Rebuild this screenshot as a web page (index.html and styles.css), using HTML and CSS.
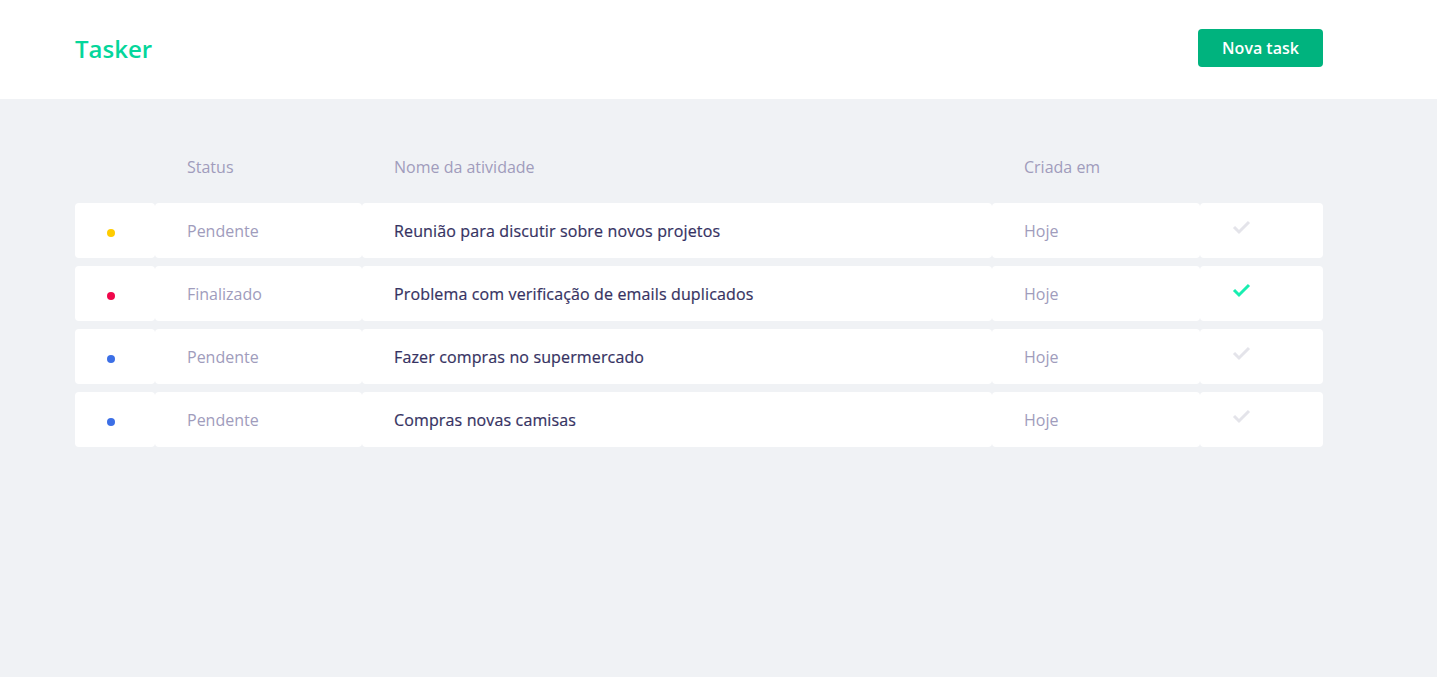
FILE: index.html
```html
<!DOCTYPE html>
<html lang="pt-BR">
<head>
<meta charset="utf-8">
<title>Tasker</title>
<link rel="stylesheet" href="styles.css">
</head>
<body>
<header class="topbar">
  <div class="topbar-inner">
    <h1 class="logo">Tasker</h1>
    <button class="btn-new" type="button">Nova task</button>
  </div>
</header>
<main class="content">
  <table class="tasks">
    <colgroup>
      <col class="c-dot"><col class="c-status"><col class="c-name"><col class="c-date"><col class="c-check">
    </colgroup>
    <thead>
      <tr><th></th><th>Status</th><th>Nome da atividade</th><th>Criada em</th><th></th></tr>
    </thead>
    <tbody>
      <tr>
        <td><span class="dot dot-yellow"></span></td>
        <td class="muted">Pendente</td>
        <td class="name">Reunião para discutir sobre novos projetos</td>
        <td class="muted">Hoje</td>
        <td><svg class="check" width="19" height="16" viewBox="0 0 19 16"><polyline points="2,8 7,13 17,3" fill="none" stroke="currentColor" stroke-width="3"/></svg></td>
      </tr>
      <tr>
        <td><span class="dot dot-red"></span></td>
        <td class="muted">Finalizado</td>
        <td class="name">Problema com verificação de emails duplicados</td>
        <td class="muted">Hoje</td>
        <td><svg class="check done" width="19" height="16" viewBox="0 0 19 16"><polyline points="2,8 7,13 17,3" fill="none" stroke="currentColor" stroke-width="3"/></svg></td>
      </tr>
      <tr>
        <td><span class="dot dot-blue"></span></td>
        <td class="muted">Pendente</td>
        <td class="name">Fazer compras no supermercado</td>
        <td class="muted">Hoje</td>
        <td><svg class="check" width="19" height="16" viewBox="0 0 19 16"><polyline points="2,8 7,13 17,3" fill="none" stroke="currentColor" stroke-width="3"/></svg></td>
      </tr>
      <tr>
        <td><span class="dot dot-blue"></span></td>
        <td class="muted">Pendente</td>
        <td class="name">Compras novas camisas</td>
        <td class="muted">Hoje</td>
        <td><svg class="check" width="19" height="16" viewBox="0 0 19 16"><polyline points="2,8 7,13 17,3" fill="none" stroke="currentColor" stroke-width="3"/></svg></td>
      </tr>
    </tbody>
  </table>
</main>
</body>
</html>
```

FILE: styles.css
```css
* { box-sizing: border-box; }
html, body { margin: 0; padding: 0; }
body {
  background: #f0f2f5;
  font-family: "Open Sans", "Noto Sans", sans-serif;
  font-size: 16px;
  min-height: 677px;
}
.topbar {
  background: #ffffff;
  height: 99px;
}
.topbar-inner {
  width: 1248px;
  margin-left: 75px;
  height: 99px;
  display: flex;
  align-items: center;
  justify-content: space-between;
}
.logo {
  margin: 0;
  font-size: 24px;
  font-weight: 600;
  color: #04d69b;
  position: relative;
  top: -1px;
}
.btn-new {
  width: 125px;
  height: 38px;
  border: 0;
  border-radius: 4px;
  background: #00b37e;
  color: #ffffff;
  font-family: inherit;
  font-size: 16px;
  font-weight: 600;
  cursor: pointer;
  margin-top: -4px;
}
.content {
  padding: 33px 0 0 75px;
}
.tasks {
  width: 1248px;
  border-collapse: separate;
  border-spacing: 0 8px;
  table-layout: fixed;
}
.c-dot { width: 80px; }
.c-status { width: 207px; }
.c-name { width: 630px; }
.c-date { width: 208px; }
.c-check { width: 123px; }
.tasks th {
  text-align: left;
  font-weight: 400;
  color: #a09cbc;
  padding: 16px 32px;
  line-height: 23px;
}
.tasks td {
  background: #ffffff;
  padding: 17px 32px 15px;
  line-height: 23px;
  border-radius: 4px;
  vertical-align: middle;
}
.muted { color: #a09cbc; }
.name {
  color: #363262;
  letter-spacing: 0.14px;
  -webkit-text-stroke: 0.2px #363262;
}
.dot {
  display: inline-block;
  width: 8px;
  height: 8px;
  border-radius: 50%;
  vertical-align: middle;
  position: relative;
  top: 0px;
}
.dot-yellow { background: #ffcc00; }
.dot-red { background: #f0074b; }
.dot-blue { background: #3c6fe6; }
.check {
  display: block;
  color: #e4e4ea;
  position: relative;
  top: -5px;
}
.check.done { color: #18eeb0; }
```
